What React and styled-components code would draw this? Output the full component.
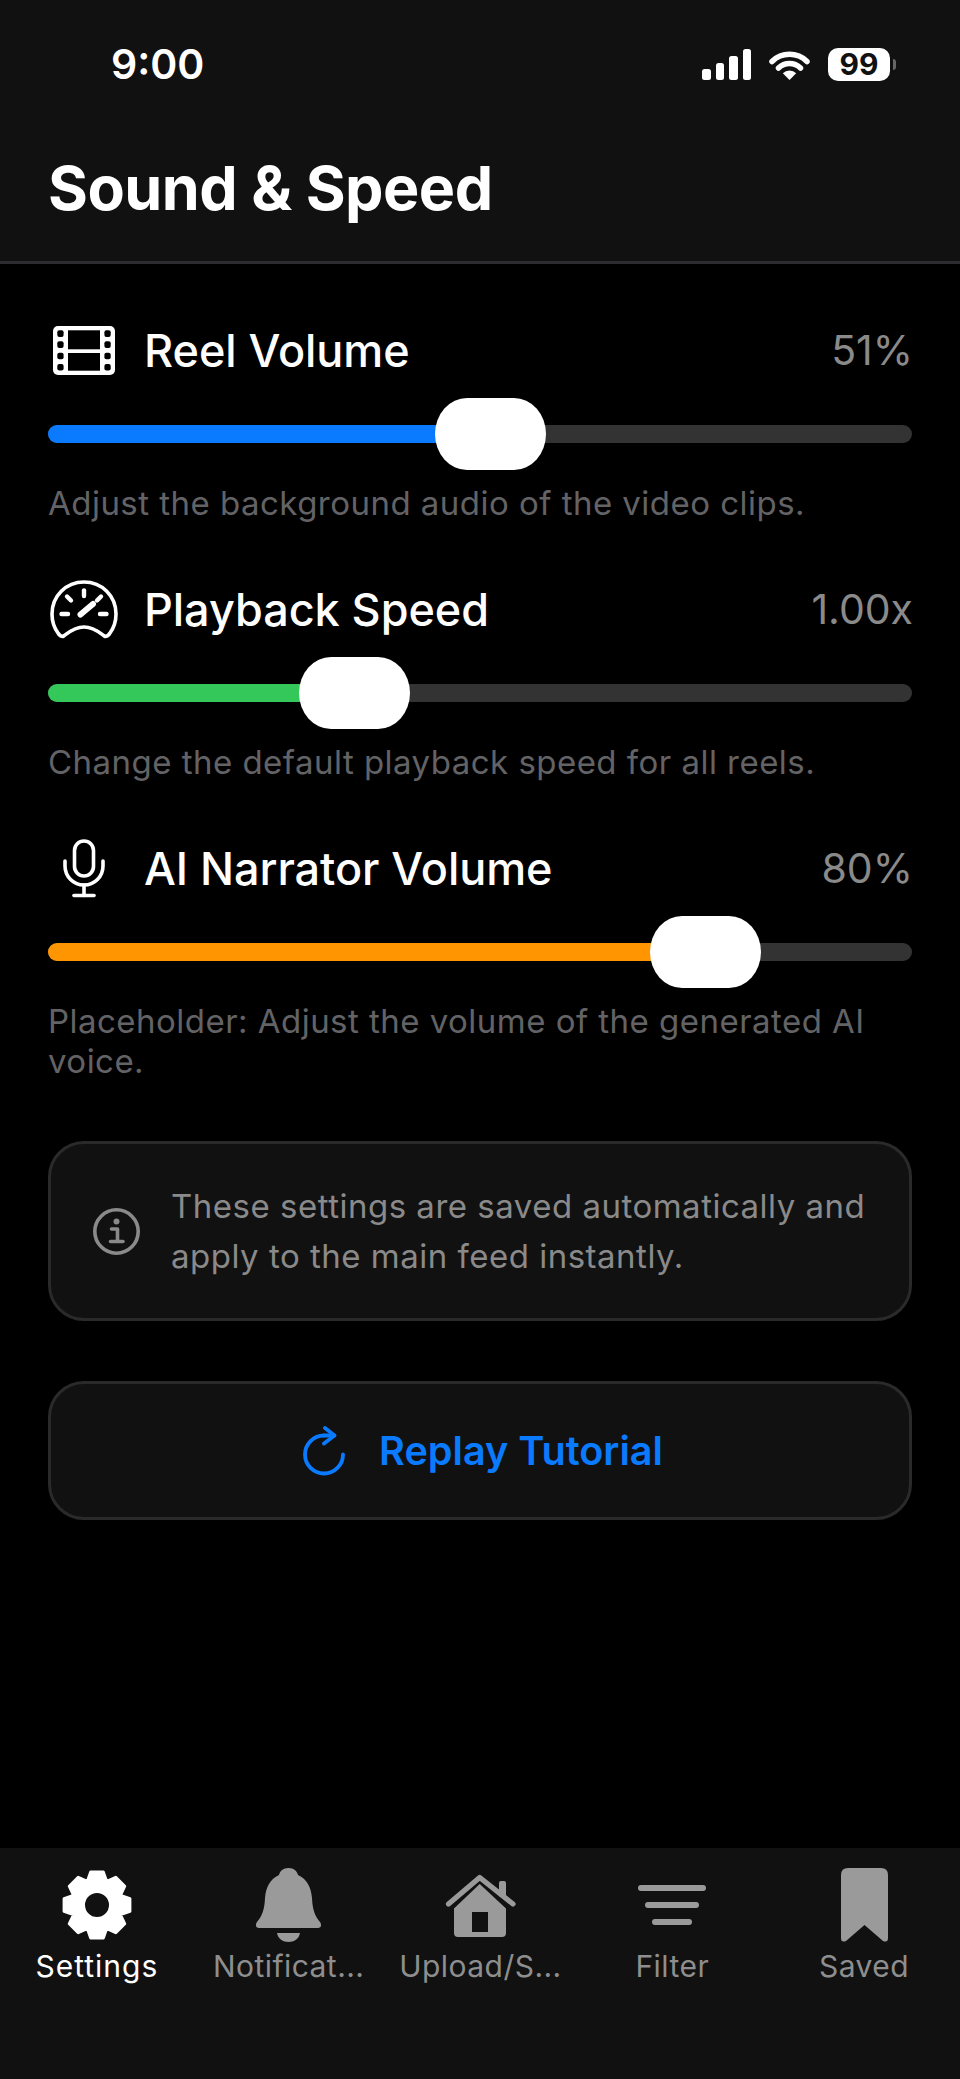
import React from "react";
import styled, { createGlobalStyle } from "styled-components";

const GlobalStyle = createGlobalStyle`
  html, body {
    margin: 0;
    background: #000;
  }
  * {
    box-sizing: border-box;
  }
`;

const Page = styled.div`
  width: 960px;
  height: 2079px;
  display: flex;
  flex-direction: column;
  background: #000;
  font-family: Inter, "Liberation Sans", sans-serif;
  overflow: hidden;
`;

const Header = styled.header`
  height: 264px;
  flex: none;
  background: #111;
  border-bottom: 3px solid #2c2c2e;
`;

const StatusBar = styled.div`
  height: 128px;
  padding: 0 70px 0 111px;
  display: flex;
  align-items: center;
  justify-content: space-between;
`;

const Time = styled.span`
  color: #fff;
  font-size: 41px;
  font-weight: 600;
`;

const StatusIcons = styled.div`
  display: flex;
  align-items: center;
  gap: 18px;
`;

const Signal = styled.div`
  display: flex;
  align-items: flex-end;
  gap: 5px;
  height: 31px;
`;

const SignalBar = styled.i`
  display: block;
  width: 8.5px;
  height: ${(p) => p.$h}px;
  border-radius: 2.5px;
  background: #fff;
`;

const Battery = styled.div`
  position: relative;
  width: 62px;
  height: 33px;
  border-radius: 10px;
  background: #fff;
  color: #111;
  font-size: 30px;
  font-weight: 700;
  line-height: 33px;
  text-align: center;

  &::after {
    content: "";
    position: absolute;
    right: -6px;
    top: 11px;
    width: 3px;
    height: 11px;
    border-radius: 0 3px 3px 0;
    background: #666;
  }
`;

const Title = styled.h1`
  margin: 28px 0 0;
  padding: 0 48px;
  color: #fff;
  font-size: 61px;
  line-height: 64px;
  font-weight: 700;
  letter-spacing: -0.5px;
`;

const Main = styled.main`
  flex: 1;
  padding: 56px 48px 0;
  display: flex;
  flex-direction: column;
`;

const Section = styled.section`
  margin-bottom: 56px;

  &:last-of-type {
    margin-bottom: 60px;
  }
`;

const SectionHead = styled.div`
  height: 60px;
  display: flex;
  align-items: center;
`;

const IconSlot = styled.div`
  width: 96px;
  flex: none;
  display: flex;
  align-items: center;
  padding-left: ${(p) => p.$pad}px;
`;

const Label = styled.span`
  flex: 1;
  color: #fff;
  font-size: 45px;
  font-weight: 500;
  letter-spacing: -0.05px;
`;

const Value = styled.span`
  color: #8a8a8a;
  font-size: 41px;
  margin-right: -1px;
`;

const Slider = styled.div`
  position: relative;
  height: 72px;
  margin-top: 18px;
  display: flex;
  align-items: center;
`;

const Track = styled.div`
  width: 100%;
  height: 18px;
  border-radius: 9px;
  background: #333;
  overflow: hidden;
`;

const Fill = styled.div`
  height: 100%;
  background: ${(p) => p.$color};
`;

const Thumb = styled.div`
  position: absolute;
  top: 0;
  width: 111px;
  height: 72px;
  border-radius: 32px / 36px;
  background: #fff;
`;

const Hint = styled.p`
  margin: 13px 0 0;
  color: #636366;
  font-size: 33px;
  line-height: 40px;
  letter-spacing: 0.47px;
`;

const Card = styled.div`
  height: ${(p) => p.$h}px;
  flex: none;
  display: flex;
  align-items: center;
  background: #111;
  border: 3px solid #2a2a2a;
  border-radius: 36px;
`;

const InfoCard = styled(Card)`
  margin-bottom: 60px;
  padding: 0 30px 0 42px;
  gap: 31px;
`;

const InfoText = styled.p`
  margin: 0;
  color: #8a8a8a;
  font-size: 33px;
  line-height: 50px;
  letter-spacing: 0.5px;
`;

const ReplayButton = styled(Card)`
  justify-content: center;
  gap: 34px;
  padding-left: 6px;
  color: #0a7aff;
  font-size: 39.6px;
  font-weight: 600;
`;

const TabBar = styled.nav`
  height: 231px;
  flex: none;
  background: #111;
  display: grid;
  grid-template-columns: repeat(5, 1fr);
  padding: 20px 0 0 1px;
`;

const Tab = styled.div`
  display: flex;
  flex-direction: column;
  align-items: center;
  color: ${(p) => (p.$active ? "#fff" : "#8e8e8e")};
`;

const TabIcon = styled.div`
  height: 74px;
  display: flex;
  align-items: center;
  justify-content: center;
  color: ${(p) => (p.$active ? "#fff" : "#9a9a9a")};
`;

const TabLabel = styled.span`
  margin-top: 6px;
  font-size: 30px;
  line-height: 36px;
  font-weight: 400;
  letter-spacing: ${(p) => (p.$active ? "1px" : "0.45px")};
  white-space: nowrap;
`;

function WifiIcon() {
  return (
    <svg width="41" height="31" viewBox="0 0 41 31">
      <path d="M3 12.5a25 25 0 0 1 35 0" fill="none" stroke="#fff" strokeWidth="5.5" strokeLinecap="round" />
      <path d="M9.5 19a16 16 0 0 1 22 0" fill="none" stroke="#fff" strokeWidth="5.5" strokeLinecap="round" />
      <path d="M20.5 31L13.8 24.2a9.6 9.6 0 0 1 13.4 0z" fill="#fff" />
    </svg>
  );
}

function FilmIcon() {
  const holes = [4.3, 15.3, 26.7, 38];
  return (
    <svg width="62" height="49" viewBox="0 0 62 49">
      <mask id="film-holes">
        <rect width="62" height="49" rx="5" fill="#fff" />
        {holes.map((y) => (
          <g key={y} fill="#000">
            <rect x="4.3" y={y} width="6.3" height="6.6" rx="2" />
            <rect x="51.4" y={y} width="6.3" height="6.6" rx="2" />
          </g>
        ))}
        <rect x="15" y="4.3" width="32" height="19" fill="#000" />
        <rect x="15" y="27" width="32" height="17.7" fill="#000" />
      </mask>
      <rect width="62" height="49" fill="#fff" mask="url(#film-holes)" />
    </svg>
  );
}

function GaugeIcon() {
  return (
    <svg width="68" height="59" viewBox="0 0 68 59" fill="none" stroke="#fff" strokeLinecap="round" strokeLinejoin="round">
      <path
        d="M13 56.5C11 56.5 9.5 55.5 8 53C4 47.5 2 41 2 34C2 16 16 2 34 2C52 2 66 16 66 34C66 41 64 47.5 60 53C58.5 55.5 57 56.5 55 56.5C50 53 44 47 34 47C24 47 18 53 13 56.5Z"
        strokeWidth="3.6"
      />
      <g strokeWidth="4.4">
        <path d="M34 10.5V16" />
        <path d="M17 16.5L21 20.5" />
        <path d="M51 16.5L47 20.5" />
        <path d="M11.5 34H18" />
        <path d="M50 34H56.5" />
      </g>
      <path d="M30.5 34.5L43 24" strokeWidth="6" />
    </svg>
  );
}

function MicIcon() {
  return (
    <svg width="42" height="59" viewBox="0 0 42 59" fill="none" stroke="#fff" strokeWidth="3.6" strokeLinecap="round">
      <rect x="11.5" y="2" width="19" height="35" rx="9.5" />
      <path d="M2 22V27C2 37.5 10.5 46 21 46C31.5 46 40 37.5 40 27V22" />
      <path d="M21 46V56.5" />
      <path d="M11 56.5H31" />
    </svg>
  );
}

function InfoIcon() {
  return (
    <svg width="47" height="47" viewBox="0 0 47 47" fill="none" stroke="#8a8a8a" style={{ flex: "none" }}>
      <circle cx="23.5" cy="23.5" r="21.7" strokeWidth="3.6" />
      <circle cx="23.5" cy="13.5" r="3" fill="#8a8a8a" stroke="none" />
      <path d="M18.5 21H24.5V33.5M17.5 33.5H30" strokeWidth="3.6" strokeLinecap="round" strokeLinejoin="round" />
    </svg>
  );
}

function ReplayIcon() {
  return (
    <svg width="42" height="50" viewBox="0 0 42 50" fill="none" stroke="#0a7aff" strokeWidth="3.8" strokeLinecap="round" strokeLinejoin="round">
      <path d="M21 9.5A19 19 0 1 0 40 28.5" />
      <path d="M21 9.5L31 9.5" />
      <path d="M22 2L31.5 9.5L21 17.5" />
    </svg>
  );
}

// gear outline built from 8 teeth, first tooth pointing up
function gearPath(cx, cy, outer, root, hole) {
  const pts = [];
  for (let i = 0; i < 8; i++) {
    const a = (i * Math.PI) / 4 - Math.PI / 2;
    [
      [-0.39, root],
      [-0.19, outer],
      [0.19, outer],
      [0.39, root],
    ].forEach(([d, r]) => {
      pts.push(`${(cx + r * Math.cos(a + d)).toFixed(2)} ${(cy + r * Math.sin(a + d)).toFixed(2)}`);
    });
  }
  const ring = `M${cx - hole} ${cy}a${hole} ${hole} 0 1 0 ${hole * 2} 0a${hole} ${hole} 0 1 0 ${-hole * 2} 0z`;
  return `M${pts.join("L")}Z${ring}`;
}

function GearIcon() {
  return (
    <svg width="72" height="72" viewBox="0 0 72 72">
      <path d={gearPath(36, 36, 33.5, 25.5, 13.5)} fill="#fff" fillRule="evenodd" stroke="#fff" strokeWidth="3" strokeLinejoin="round" />
    </svg>
  );
}

function BellIcon() {
  return (
    <svg width="67" height="74" viewBox="0 0 67 74" fill="currentColor">
      <path d="M33.5 0C39 0 42 3 43 7C52 11 56 19 57 30C57.5 42 60 48 65 54C67 57 66 60 63 60H4C1 60 0 57 2 54C7 48 9.5 42 10 30C11 19 15 11 24 7C25 3 28 0 33.5 0Z" />
      <path d="M22 65H45C44 71 39 74 33.5 74C28 74 23 71 22 65Z" />
    </svg>
  );
}

function HouseIcon() {
  return (
    <svg width="71" height="66" viewBox="0 0 71 66" fill="currentColor">
      <path d="M3.5 32L34.7 5.5L68 32" fill="none" stroke="currentColor" strokeWidth="5.2" strokeLinecap="round" strokeLinejoin="round" />
      <rect x="54" y="9" width="7" height="16" rx="2" />
      <path
        fillRule="evenodd"
        d="M34.7 12L61 36.5V61Q61 65 57 65H13Q9 65 9 61V36.5ZM27 40V60H43V40Z"
      />
    </svg>
  );
}

function FilterIcon() {
  return (
    <svg width="68" height="40" viewBox="0 0 68 40" stroke="currentColor" strokeWidth="6" strokeLinecap="round">
      <path d="M3 3H65" />
      <path d="M10 20H58" />
      <path d="M17 37H51" />
    </svg>
  );
}

function BookmarkIcon() {
  return (
    <svg width="47" height="74" viewBox="0 0 47 74" fill="currentColor">
      <path d="M7 0H40Q47 0 47 7V70Q47 75 42 73L23.5 57L5 73Q0 75 0 70V7Q0 0 7 0Z" />
    </svg>
  );
}

const settings = [
  {
    label: "Reel Volume",
    value: "51%",
    hint: "Adjust the background audio of the video clips.",
    color: "#0a7aff",
    ratio: 0.514,
    icon: <FilmIcon />,
    pad: 5,
  },
  {
    label: "Playback Speed",
    value: "1.00x",
    hint: "Change the default playback speed for all reels.",
    color: "#34c759",
    ratio: 1 / 3,
    icon: <GaugeIcon />,
    pad: 2,
  },
  {
    label: "AI Narrator Volume",
    value: "80%",
    hint: "Placeholder: Adjust the volume of the generated AI voice.",
    color: "#ff9500",
    ratio: 0.8,
    icon: <MicIcon />,
    pad: 15,
  },
];

const tabs = [
  { label: "Settings", icon: <GearIcon />, active: true },
  { label: "Notificat...", icon: <BellIcon /> },
  { label: "Upload/S...", icon: <HouseIcon /> },
  { label: "Filter", icon: <FilterIcon /> },
  { label: "Saved", icon: <BookmarkIcon /> },
];

const THUMB_TRAVEL = 753;

function SettingSection({ item }) {
  const left = item.ratio * THUMB_TRAVEL;
  return (
    <Section>
      <SectionHead>
        <IconSlot $pad={item.pad}>{item.icon}</IconSlot>
        <Label>{item.label}</Label>
        <Value>{item.value}</Value>
      </SectionHead>
      <Slider>
        <Track>
          <Fill $color={item.color} style={{ width: left + 55 }} />
        </Track>
        <Thumb style={{ left }} />
      </Slider>
      <Hint>{item.hint}</Hint>
    </Section>
  );
}

export default function App() {
  return (
    <Page>
      <GlobalStyle />
      <Header>
        <StatusBar>
          <Time>9:00</Time>
          <StatusIcons>
            <Signal>
              {[11, 17, 24, 31].map((h) => (
                <SignalBar key={h} $h={h} />
              ))}
            </Signal>
            <WifiIcon />
            <Battery>99</Battery>
          </StatusIcons>
        </StatusBar>
        <Title>Sound &amp; Speed</Title>
      </Header>
      <Main>
        {settings.map((item) => (
          <SettingSection key={item.label} item={item} />
        ))}
        <InfoCard $h={180}>
          <InfoIcon />
          <InfoText>
            These settings are saved automatically and apply to the main feed instantly.
          </InfoText>
        </InfoCard>
        <ReplayButton $h={139}>
          <ReplayIcon />
          <span>Replay Tutorial</span>
        </ReplayButton>
      </Main>
      <TabBar>
        {tabs.map((tab) => (
          <Tab key={tab.label} $active={tab.active}>
            <TabIcon $active={tab.active}>{tab.icon}</TabIcon>
            <TabLabel $active={tab.active}>{tab.label}</TabLabel>
          </Tab>
        ))}
      </TabBar>
    </Page>
  );
}
